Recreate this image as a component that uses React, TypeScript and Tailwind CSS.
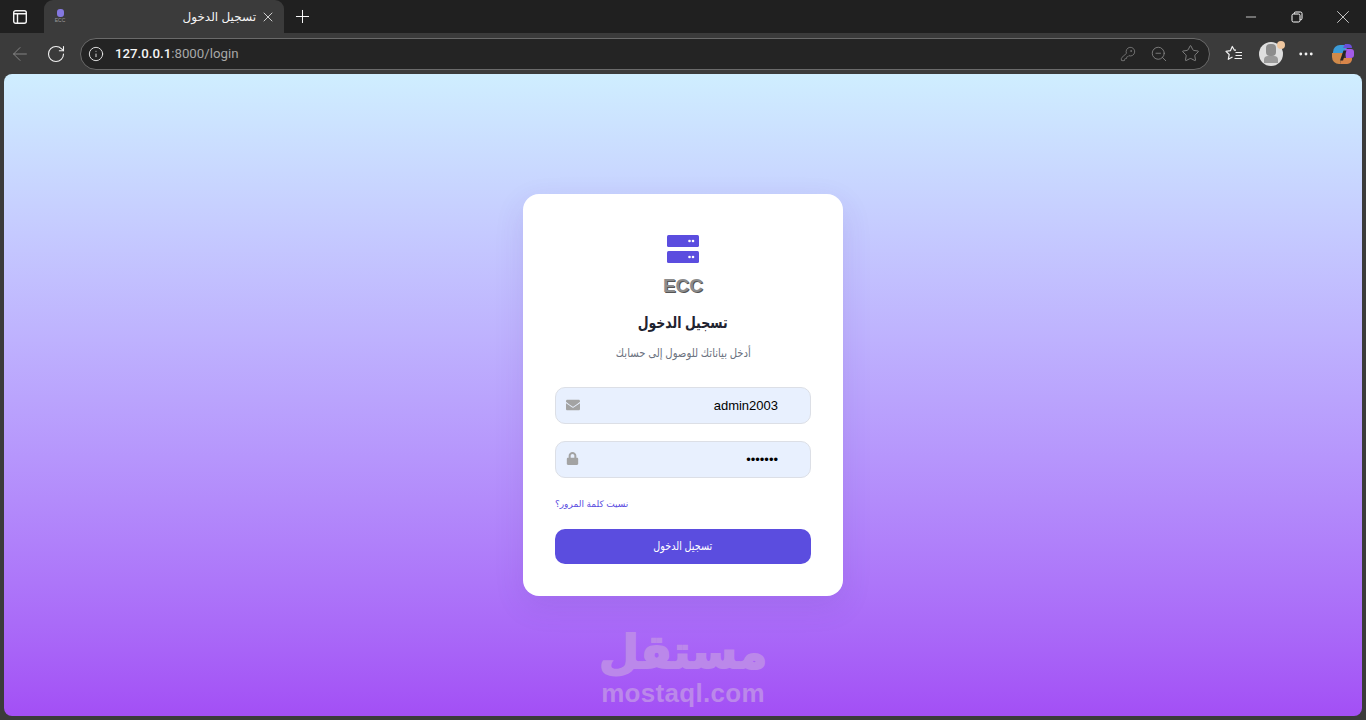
import React from 'react';
import { ArrowLeft, RotateCw, Info, KeyRound, ZoomOut, Star, Plus, X, Minus, MoreHorizontal } from 'lucide-react';
import { FaEnvelope, FaLock } from 'react-icons/fa';

const arabicFont = "font-['Liberation_Sans','DejaVu_Sans',sans-serif]";

const TabStrip = () => (
    <div className="h-[33px] bg-[#202020] flex items-end shrink-0">
        <div className="w-[44px] h-[33px] pr-[4px] flex items-center justify-center">
            <svg width="16" height="16" viewBox="0 0 16 16" fill="none" stroke="#f5f5f5" strokeWidth="1.4">
                <rect x="1.7" y="1.7" width="12.6" height="12.6" rx="2" />
                <path d="M1.7 4.8h12.6M5.5 4.8v9.5" />
            </svg>
        </div>
        <div className="w-[240px] h-[33px] bg-[#3b3b3b] rounded-t-[9px] flex items-center pl-[9px] pr-[8px] text-white">
            <div className="w-[14px] h-[16px] flex flex-col items-center">
                <div className="w-[7px] h-[8px] rounded-[3px] bg-[#8478e0]" />
                <span className="text-[5px] leading-[6px] text-[#9a9a9a] font-['Liberation_Sans',sans-serif]">ECC</span>
            </div>
            <div dir="rtl" className={`flex-1 text-[12px] text-[#f5f5f5] text-right ${arabicFont}`}>
                تسجيل الدخول
            </div>
            <X size={16} strokeWidth={1.3} className="ml-[4px] text-[#e6e6e6]" />
        </div>
        <div className="w-[36px] h-[33px] flex items-center justify-center">
            <Plus size={21} strokeWidth={1.1} className="text-white" />
        </div>
        <div className="flex-1" />
        <div className="flex h-[33px] items-center text-white">
            <div className="w-[46px] flex justify-center"><Minus size={16} strokeWidth={1.1} /></div>
            <div className="w-[46px] flex justify-center">
                <svg width="12" height="12" viewBox="0 0 12 12" fill="none" stroke="#fff" strokeWidth="1">
                    <rect x="1" y="3" width="8" height="8" rx="1.5" />
                    <path d="M3.2 3V2.2A1.5 1.5 0 0 1 4.7 1H9.5A1.5 1.5 0 0 1 11 2.5V7.3A1.5 1.5 0 0 1 9.2 8.8" />
                </svg>
            </div>
            <div className="w-[46px] flex justify-center"><X size={22} strokeWidth={0.8} /></div>
        </div>
    </div>
);

const Toolbar = () => (
    <div className="h-[41px] bg-[#3b3b3b] flex items-center shrink-0">
        <div className="w-[40px] flex justify-center"><ArrowLeft size={22} strokeWidth={1} className="text-[#8a8a8a]" /></div>
        <div className="w-[32px] flex justify-center"><RotateCw size={20} strokeWidth={1.3} className="text-[#f2f2f2]" /></div>
        <div className="ml-[8px] w-[1130px] h-[32px] bg-[#242424] border border-[#6a6a6a] rounded-full flex items-center pl-[7px] pr-[9px]">
            <Info size={16} strokeWidth={1.4} className="text-[#e8e8e8]" />
            <span className="ml-[11px] pt-px text-[13.25px] font-['Roboto',sans-serif] text-[#f5f5f5] font-medium">
                127.0.0.1<span className="text-[#a8a8a8] font-normal">:8000/login</span>
            </span>
            <div className="flex-1" />
            <KeyRound size={16} strokeWidth={1.1} className="text-[#8a8a8a]" />
            <ZoomOut size={18} strokeWidth={1.1} className="ml-[14px] text-[#8a8a8a]" />
            <Star size={19} strokeWidth={1.1} className="ml-[13px] text-[#8a8a8a]" />
        </div>
        <div className="ml-[14px] w-[20px] flex justify-center">
            <svg width="18" height="18" viewBox="0 0 18 18" fill="none" stroke="#f2f2f2" strokeWidth="1.2" strokeLinejoin="round">
                <path d="M11 5.2H9.4L7.3 1.5 5.4 5.7 1 6.3l3.2 3.2-.9 4.8 4.2-2.4" />
                <path d="M10.5 7.5H17M10.5 10.5H17M9.5 13.5H17" />
            </svg>
        </div>
        <div className="relative ml-[15px] w-[24px] h-[24px] rounded-full bg-[#dedede] flex items-center justify-center">
            <div className="flex flex-col items-center">
                <div className="w-[10px] h-[12px] rounded-[4px] bg-[#8c8c8c]" />
                <div className="w-[14px] h-[7px] rounded-t-[4px] bg-[#9a9a9a]" />
            </div>
            <div className="absolute -top-[1px] -right-[2px] w-[8px] h-[8px] rounded-full bg-[#f0c8a0]" />
        </div>
        <div className="ml-[11px] w-[24px] flex justify-center">
            <MoreHorizontal size={18} strokeWidth={1.8} className="text-[#f2f2f2]" />
        </div>
        <div className="ml-[13px]">
            <svg width="24" height="24" viewBox="0 0 24 24">
                <path d="M2 10a7 7 0 0 1 7-7h8l-3 8H2z" fill="#3b9bd8" />
                <path d="M14 2h3a4 4 0 0 1 4 4H12z" fill="#6a4fd8" />
                <path d="M14 7h6a3 3 0 0 1 3 3v3a3 3 0 0 1-3 3h-5z" fill="#a45be8" />
                <path d="M1 11h11l-3 11H8a7 7 0 0 1-7-7z" fill="#d08a4a" />
                <path d="M9 22l2-6h10a5 5 0 0 1-5 6z" fill="#d8854a" />
                <path d="M12.5 8.5h3l-3.5 10H9z" fill="#262626" />
            </svg>
        </div>
    </div>
);

const Field = ({ type, value, icon }: { type: string; value: string; icon: React.ReactNode }) => (
    <div className="relative">
        <input
            readOnly
            dir="rtl"
            type={type}
            value={value}
            className="w-full h-[37px] bg-[#e8f0fe] border border-[#dcdfe6] rounded-[10px] pl-[40px] pr-[32px] text-[13px] text-black outline-none font-['Liberation_Sans',sans-serif]"
        />
        <span className="absolute left-[11px] top-[11px] text-[#a3a3a3]">{icon}</span>
    </div>
);

const LoginCard = () => (
    <div dir="rtl" className={`w-[320px] h-[402px] bg-white rounded-[16px] shadow-[0_10px_30px_rgba(80,50,160,0.12)] px-[32px] pt-[41px] ${arabicFont}`}>
        <div className="flex flex-col items-center">
            <svg width="32" height="28" viewBox="0 0 32 28">
                <rect x="0" y="0" width="32" height="12" rx="1.5" fill="#5b4ddf" />
                <rect x="0" y="16" width="32" height="12" rx="1.5" fill="#5b4ddf" />
                <circle cx="22.5" cy="6" r="1.3" fill="#fff" />
                <circle cx="26" cy="6" r="1.3" fill="#fff" />
                <circle cx="22.5" cy="22" r="1.3" fill="#fff" />
                <circle cx="26" cy="22" r="1.3" fill="#fff" />
            </svg>
            <div dir="ltr" className="mt-[10px] text-[19px] leading-[26px] font-bold text-[#8c8c8c] font-['Liberation_Sans',sans-serif] [text-shadow:1px_1px_0_#555]">
                ECC
            </div>
            <h1 className="mt-[12px] text-[16px] leading-[24px] font-bold text-[#1f2430] scale-x-[0.78]">تسجيل الدخول</h1>
            <p className="mt-[9px] text-[12px] leading-[18px] text-[#6b7280] scale-x-[0.84]">أدخل بياناتك للوصول إلى حسابك</p>
        </div>
        <div className="mt-[25px] flex flex-col gap-[17px]">
            <Field type="text" value="admin2003" icon={<FaEnvelope size={14} />} />
            <Field type="password" value="1234567" icon={<FaLock size={13} />} />
        </div>
        <div className="mt-[17px] text-left leading-[14px]">
            <a className="text-[9px] leading-[14px] text-[#5b4ddf]">نسيت كلمة المرور؟</a>
        </div>
        <button className="mt-[18px] w-full h-[35px] pb-px bg-[#5b4ddf] rounded-[10px] text-white text-[12px]">
            <span className="inline-block scale-x-[0.8]">تسجيل الدخول</span>
        </button>
    </div>
);

const App = () => (
    <div className="w-[1366px] h-[720px] overflow-hidden bg-[#3b3b3b] flex flex-col">
        <TabStrip />
        <Toolbar />
        <div className="flex-1 px-[4px] pb-[4px] min-h-0">
            <div className="relative h-full rounded-[8px] bg-gradient-to-b from-[#cfeeff] to-[#a34ff5] flex items-start justify-center pt-[120px] overflow-hidden">
                <LoginCard />
                {/* watermark */}
                <div className="absolute left-0 right-0 bottom-[11px] flex flex-col items-center text-[#bb88ea] pointer-events-none">
                    <div dir="rtl" className="h-[53px] text-[46px] leading-[48px] font-bold font-['DejaVu_Sans',sans-serif] [-webkit-text-stroke:2px_#bb88ea]">مستقل</div>
                    <div className="h-[24px] text-[26px] leading-[24px] font-bold tracking-[0.3px] font-['Liberation_Sans',sans-serif]">mostaql.com</div>
                </div>
            </div>
        </div>
    </div>
);

export default App;
